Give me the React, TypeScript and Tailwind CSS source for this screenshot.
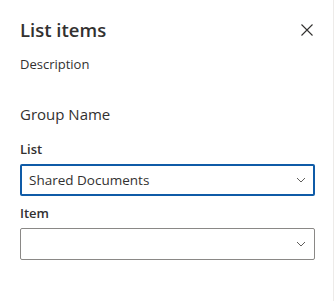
import React from "react";

function Chevron() {
  return (
    <svg width="10" height="10" viewBox="0 0 10 10" fill="none">
      <path d="M1 3 L5 7 L9 3" stroke="#605e5c" strokeWidth="1" />
    </svg>
  );
}

export default function App() {
  return (
    <div
      className="w-[334px] h-[301px] bg-white border-r border-[#edebe9] text-[#323130]"
      style={{ fontFamily: '"Open Sans", "Noto Sans", sans-serif' }}
    >
      <div className="flex items-start justify-between pl-5 pr-[14px] pt-[16px]">
        <h1 className="text-[18.5px] leading-[28px] font-semibold">List items</h1>
        <button className="w-[24px] h-[24px] mt-[2px] flex items-center justify-center">
          <svg width="12" height="12" viewBox="0 0 12 12">
            <path d="M0.5 0.5 L11.5 11.5 M11.5 0.5 L0.5 11.5" stroke="#323130" strokeWidth="1.1" />
          </svg>
        </button>
      </div>
      <div className="px-5">
        <p className="text-[13px] leading-[20px] mt-[10px]">Description</p>
        <p className="text-[15px] leading-[24px] mt-[28px]">Group Name</p>
        <label className="block text-[13px] leading-[20px] font-semibold mt-[13px]">List</label>
        <div className="mt-[5px] w-[295px] h-[32px] border-2 border-[#0f5ba7] rounded-[2px] flex items-center justify-between pl-[7px] pr-[7px]">
          <span className="text-[13.5px]">Shared Documents</span>
          <Chevron />
        </div>
        <label className="block text-[13px] leading-[20px] font-semibold mt-[7px]">Item</label>
        <div className="mt-[5px] w-[295px] h-[32px] border border-[#8a8886] rounded-[2px] flex items-center justify-end pr-[8px]">
          <Chevron />
        </div>
      </div>
    </div>
  );
}
